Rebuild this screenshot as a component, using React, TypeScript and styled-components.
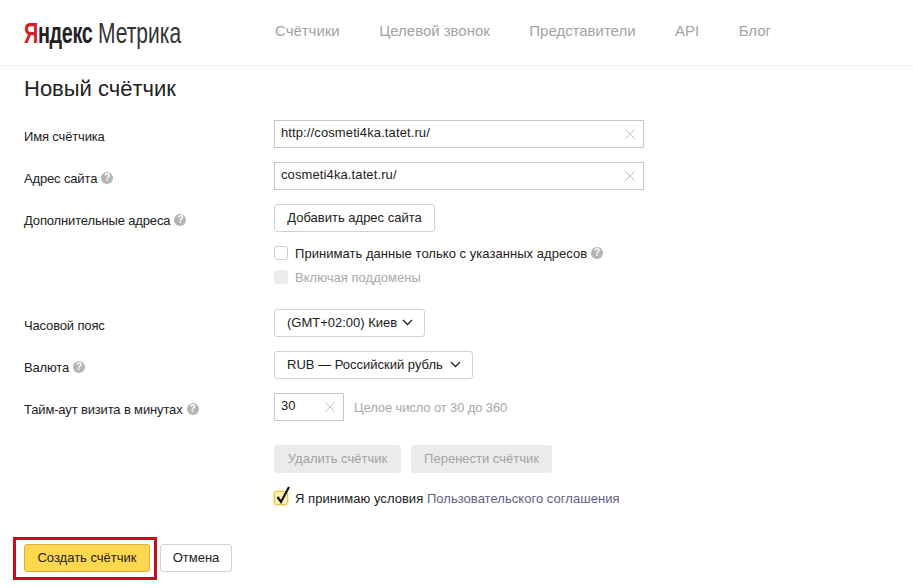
import styled, { createGlobalStyle } from "styled-components";

const GlobalStyle = createGlobalStyle`
html, body {
    margin: 0;
    padding: 0;
    background: #fff;
    font-family: "Liberation Sans", Arial, sans-serif;
    font-size: 13px;
    color: #222;
}
`

const Page = styled.div`
width: 913px;
height: 588px;
overflow: hidden;
`

const Header = styled.header`
height: 65px;
border-bottom: 1px solid #f0f0f0;
display: flex;
align-items: center;
padding-left: 24px;
`

const Logo = styled.div`
width: 251px;
height: 32px;
flex: none;
display: flex;
align-items: center;
font-size: 30px;
white-space: nowrap;
`

const LogoPart = styled.span<{ $scale: number }>`
display: inline-block;
transform: scaleX(${p => p.$scale});
transform-origin: left center;
`

const LogoBold = styled(LogoPart)`
font-weight: bold;
width: 74px;
letter-spacing: -0.5px;
`

const LogoRed = styled.span`
color: #d0202a;
`

const LogoThin = styled(LogoPart)`
font-weight: normal;
color: #333;
`

const Nav = styled.nav`
display: flex;
gap: 39.5px;
font-size: 15px;
color: #a3a3a3;
margin-top: -5px;
letter-spacing: -0.02px;
`

const Title = styled.h1`
margin: 0;
padding: 10px 0 0 24px;
height: 44px;
box-sizing: border-box;
font-size: 22px;
line-height: 25px;
font-weight: normal;
color: #222;
`

const Form = styled.div`
padding: 10px 0 0 24px;
`

const Row = styled.div<{ $bottom: number }>`
display: grid;
grid-template-columns: 250px 1fr;
margin-bottom: ${p => p.$bottom}px;
`

const Label = styled.div`
display: flex;
align-items: center;
gap: 4px;
height: 28px;
padding-top: 4px;
box-sizing: border-box;
font-size: 13px;
letter-spacing: -0.15px;
color: #222;
`

const Control = styled.div`
display: flex;
flex-direction: column;
align-items: flex-start;
`

const Hint = styled.span`
display: inline-flex;
align-items: center;
justify-content: center;
width: 12px;
height: 12px;
border-radius: 50%;
background: #b5b5b5;
color: #fff;
font-size: 10px;
font-weight: bold;
line-height: 12px;
`

const InputBox = styled.div<{ $width: number }>`
width: ${p => p.$width}px;
height: 28px;
box-sizing: border-box;
border: 1px solid #c6c6c6;
display: flex;
align-items: center;
justify-content: space-between;
padding: 0 7px 4px 6px;
font-size: 13px;
letter-spacing: 0.11px;
color: #222;
`

const Clear = styled.svg`
width: 12px;
height: 12px;
flex: none;
margin-top: 4px;
stroke: #c4c4c4;
stroke-width: 1;
fill: none;
`

const InlineRow = styled.div`
display: flex;
align-items: center;
gap: 10px;
`

const Muted = styled.span`
color: #a8a8a8;
font-size: 13px;
letter-spacing: -0.12px;
`

const Button = styled.div<{ $width: number; $kind?: "plain" | "off" | "action" }>`
width: ${p => p.$width}px;
height: 28px;
box-sizing: border-box;
flex: none;
display: flex;
align-items: center;
justify-content: center;
border-radius: 3px;
font-size: 13px;
padding-bottom: 1px;
border: 1px solid ${p => (p.$kind === "off" ? "#ebebeb" : p.$kind === "action" ? "#d9b13f" : "#d2d2d2")};
background: ${p => (p.$kind === "off" ? "#ebebeb" : p.$kind === "action" ? "#ffd84f" : "#fff")};
color: ${p => (p.$kind === "off" ? "#a3a3a3" : "#222")};
`

const SelectButton = styled(Button)`
justify-content: space-between;
padding: 0 11px 1px 12px;
`

const Arrow = styled.svg`
width: 11px;
height: 7px;
flex: none;
stroke: #222;
stroke-width: 1.3;
fill: none;
`

const CheckRow = styled.div<{ $top: number; $off?: boolean }>`
display: flex;
align-items: center;
gap: 7px;
height: 16px;
margin-top: ${p => p.$top}px;
color: ${p => (p.$off ? "#a8a8a8" : "#222")};
font-size: 13px;
letter-spacing: 0.04px;
`

const Box = styled.span<{ $state?: "off" | "on" }>`
position: relative;
width: 14px;
height: 14px;
box-sizing: border-box;
border-radius: 3px;
flex: none;
border: 1px solid ${p => (p.$state === "off" ? "#ececec" : p.$state === "on" ? "#e0c060" : "#cfcfcf")};
background: ${p => (p.$state === "off" ? "#ececec" : p.$state === "on" ? "#fff0b4" : "#fff")};
box-shadow: ${p => (p.$state === "on" ? "0 0 2px 1px #ffe9a0" : "none")};
`

const Tick = styled.svg`
position: absolute;
left: 0;
top: -7px;
width: 16px;
height: 20px;
stroke: #111;
stroke-width: 2.2;
fill: none;
`

const TextWithHint = styled.span`
display: inline-flex;
align-items: center;
gap: 4px;
`

const Terms = styled.a`
color: #5f5e85;
text-decoration: none;
`

const Footer = styled.div`
display: flex;
gap: 10px;
margin-top: 38px;
padding-left: 24px;
`

const Highlight = styled.div`
position: relative;
`

const RedFrame = styled.div`
position: absolute;
left: -11px;
top: -7px;
right: -7px;
bottom: -8px;
border: 3px solid #cc0a1e;
pointer-events: none;
`

function ClearIcon() {
    return (
        <Clear viewBox="0 0 12 12">
            <path d="M1 1 L11 11 M11 1 L1 11" />
        </Clear>
    );
}

function ArrowIcon() {
    return (
        <Arrow viewBox="0 0 11 7">
            <path d="M1 1 L5.5 5.5 L10 1" />
        </Arrow>
    );
}

export default function App() {
    return (
        <Page>
            <GlobalStyle />
            <Header>
                <Logo>
                    <LogoBold $scale={0.66}><LogoRed>Я</LogoRed>ндекс</LogoBold>
                    <LogoThin $scale={0.7}>Метрика</LogoThin>
                </Logo>
                <Nav>
                    <span>Счётчики</span>
                    <span>Целевой звонок</span>
                    <span>Представители</span>
                    <span>API</span>
                    <span>Блог</span>
                </Nav>
            </Header>
            <Title>Новый счётчик</Title>
            <Form>
                <Row $bottom={14}>
                    <Label>Имя счётчика</Label>
                    <Control>
                        <InputBox $width={370}>http://cosmeti4ka.tatet.ru/<ClearIcon /></InputBox>
                    </Control>
                </Row>
                <Row $bottom={14}>
                    <Label>Адрес сайта <Hint>?</Hint></Label>
                    <Control>
                        <InputBox $width={370}>cosmeti4ka.tatet.ru/<ClearIcon /></InputBox>
                    </Control>
                </Row>
                <Row $bottom={24}>
                    <Label>Дополнительные адреса <Hint>?</Hint></Label>
                    <Control>
                        <Button $width={161}>Добавить адрес сайта</Button>
                        <CheckRow $top={13}>
                            <Box />
                            <TextWithHint>Принимать данные только с указанных адресов <Hint>?</Hint></TextWithHint>
                        </CheckRow>
                        <CheckRow $top={8} $off>
                            <Box $state="off" />
                            Включая поддомены
                        </CheckRow>
                    </Control>
                </Row>
                <Row $bottom={14}>
                    <Label>Часовой пояс</Label>
                    <Control>
                        <SelectButton $width={151}>(GMT+02:00) Киев <ArrowIcon /></SelectButton>
                    </Control>
                </Row>
                <Row $bottom={14}>
                    <Label>Валюта <Hint>?</Hint></Label>
                    <Control>
                        <SelectButton $width={199}>RUB — Российский рубль <ArrowIcon /></SelectButton>
                    </Control>
                </Row>
                <Row $bottom={24}>
                    <Label>Тайм-аут визита в минутах <Hint>?</Hint></Label>
                    <Control>
                        <InlineRow>
                            <InputBox $width={70}>30<ClearIcon /></InputBox>
                            <Muted>Целое число от 30 до 360</Muted>
                        </InlineRow>
                    </Control>
                </Row>
                <Row $bottom={0}>
                    <div />
                    <Control>
                        <InlineRow>
                            <Button $width={127} $kind="off">Удалить счётчик</Button>
                            <Button $width={141} $kind="off">Перенести счётчик</Button>
                        </InlineRow>
                        <CheckRow $top={17}>
                            <Box $state="on">
                                <Tick viewBox="0 0 16 20">
                                    <path d="M2.5 12 L6 17 L14 2" />
                                </Tick>
                            </Box>
                            <span>Я принимаю условия <Terms>Пользовательского соглашения</Terms></span>
                        </CheckRow>
                    </Control>
                </Row>
            </Form>
            <Footer>
                <Highlight>
                    <Button $width={126} $kind="action">Создать счётчик</Button>
                    <RedFrame />
                </Highlight>
                <Button $width={72}>Отмена</Button>
            </Footer>
        </Page>
    );
}
